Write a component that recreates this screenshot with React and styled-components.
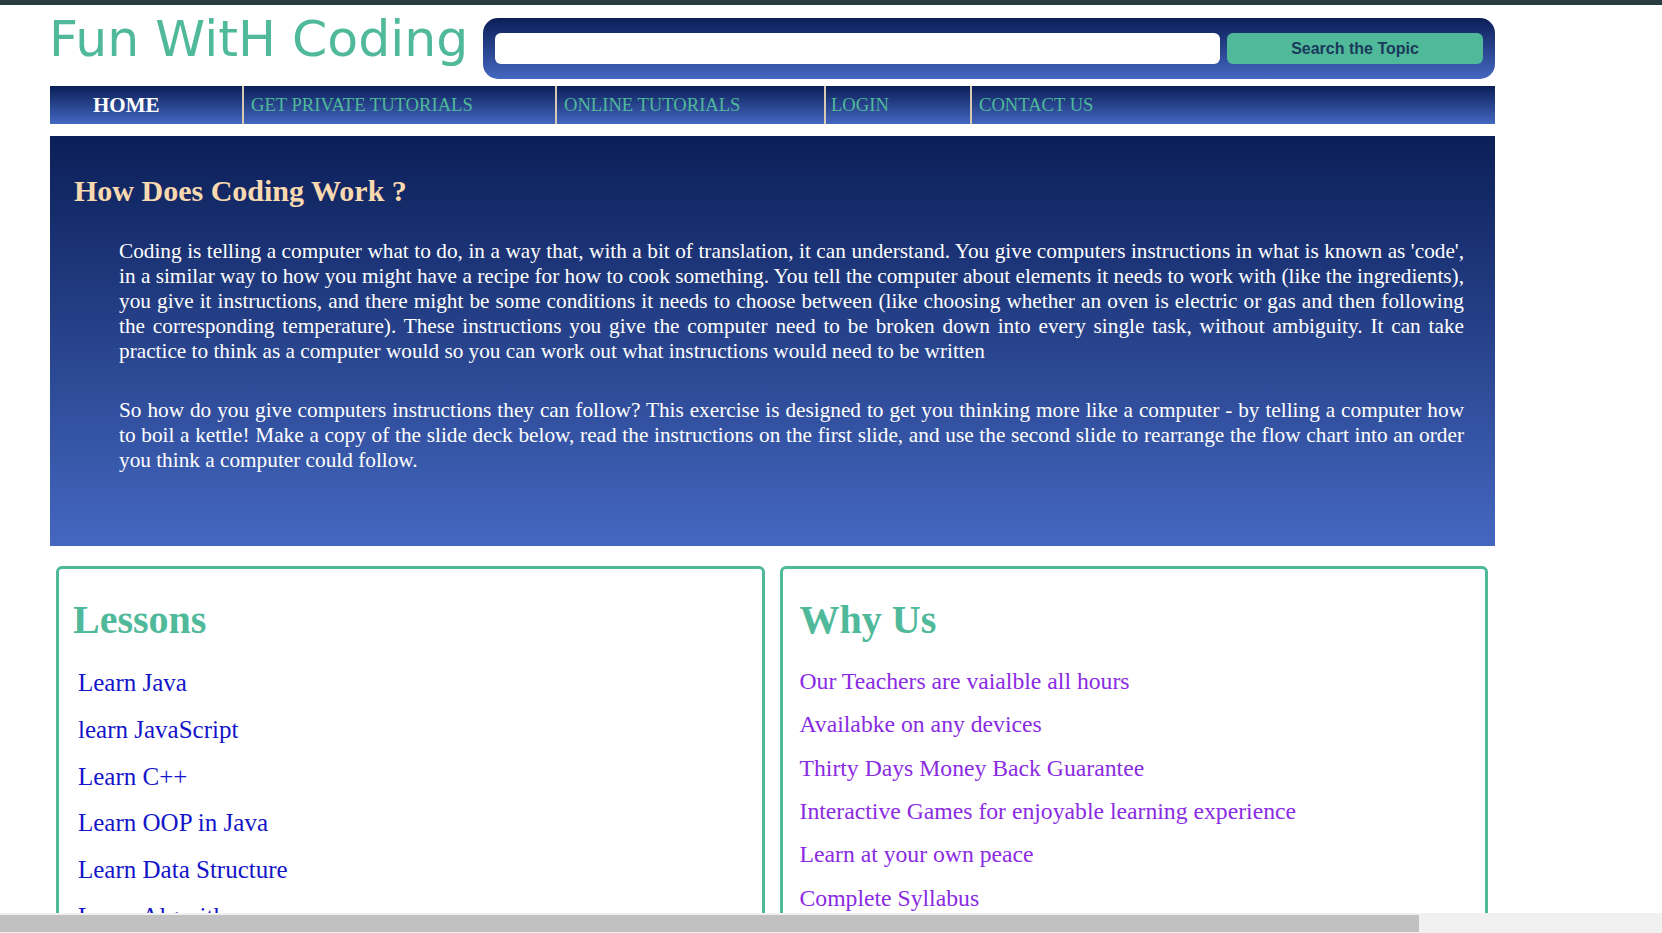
import React from "react";
import styled, { createGlobalStyle } from "styled-components";

const GlobalStyle = createGlobalStyle`
  html, body {
    margin: 0;
    padding: 0;
    overflow: hidden;
    background: #ffffff;
  }
  body {
    font-family: "Liberation Serif", "Times New Roman", serif;
  }
  * { box-sizing: border-box; }
`;

const blueGradient = "linear-gradient(180deg, #0b1f58 0%, #4467c0 100%)";
const teal = "#4fb99a";

const TopBar = styled.div`
  height: 5px;
  background: #283c41;
`;

const Wrapper = styled.div`
  margin-left: 50px;
  width: 1445px;
`;

const Header = styled.header`
  display: flex;
  align-items: flex-start;
`;

const Logo = styled.h1`
  margin: 4.7px 0 0 -1px;
  font-family: "DejaVu Sans", Verdana, sans-serif;
  font-weight: normal;
  font-size: 50.5px;
  line-height: 58px;
  color: ${teal};
  white-space: nowrap;
`;

const SearchBox = styled.form`
  flex: 0 0 1012px;
  margin: 13px 0 0 auto;
  height: 61px;
  padding: 15px 12px;
  display: flex;
  gap: 7px;
  border-radius: 15px;
  background: ${blueGradient};
`;

const SearchInput = styled.input`
  width: 725px;
  height: 31px;
  border: none;
  border-radius: 6px;
  background: #ffffff;
  outline: none;
`;

const SearchButton = styled.button`
  flex: 1;
  height: 31px;
  border: none;
  border-radius: 6px;
  background: ${teal};
  font-family: "Liberation Sans", Arial, sans-serif;
  font-weight: bold;
  font-size: 16px;
  color: #1a3a5a;
  padding: 0;
`;

const Nav = styled.nav`
  margin-top: 7px;
  height: 38px;
  display: flex;
  background: ${blueGradient};
`;

const NavItem = styled.a`
  display: flex;
  align-items: center;
  flex: ${(p) => (p.$w ? `0 0 ${p.$w}px` : "1")};
  padding-left: ${(p) => p.$pl}px;
  border-left: ${(p) => (p.$first ? "none" : "2px solid #d8cab0")};
  font-family: "Liberation Serif", "Times New Roman", serif;
  font-size: ${(p) => (p.$active ? "21px" : "18.6px")};
  font-weight: ${(p) => (p.$active ? "bold" : "normal")};
  color: ${(p) => (p.$active ? "#ffffff" : teal)};
  text-decoration: none;
  white-space: nowrap;
`;

const Main = styled.section`
  margin-top: 12px;
  padding: 37.4px 31px 72.6px 24px;
  background: ${blueGradient};
`;

const MainTitle = styled.h2`
  margin: 0;
  font-size: 30px;
  line-height: 35px;
  font-weight: bold;
  color: #f8d9b0;
`;

const Para = styled.p`
  margin: ${(p) => p.$mt}px 0 0 45px;
  font-size: 21.28px;
  line-height: 25px;
  color: #ffffff;
  text-align: justify;
`;

const Cards = styled.div`
  margin-top: 20px;
  display: grid;
  grid-template-columns: 1fr 1fr;
  gap: 15px;
  padding: 0 7px 0 6px;
`;

const Card = styled.div`
  min-width: 0;
  border: 3px solid ${teal};
  border-radius: 6px;
  padding: 28.5px ${(p) => p.$px}px 40px;
`;

const CardTitle = styled.h2`
  margin: 0;
  font-size: 40px;
  line-height: 46px;
  font-weight: bold;
  color: ${teal};
`;

const List = styled.ul`
  list-style: none;
  margin: 16.7px 0 0 0;
  padding: 0 0 0 ${(p) => p.$indent}px;
`;

const Item = styled.li`
  font-size: ${(p) => p.$fs}px;
  line-height: ${(p) => p.$lh}px;
  color: ${(p) => p.$color};
  white-space: nowrap;
`;

const ScrollTrack = styled.div`
  position: fixed;
  left: 0;
  bottom: 0;
  width: 100%;
  height: 20px;
  background: #f0f0f0;
  padding-top: 2px;
`;

const ScrollThumb = styled.div`
  width: 1419px;
  height: 17px;
  background: #c1c1c1;
`;

const navItems = [
  { label: "HOME", w: 192, pl: 43, first: true, active: true },
  { label: "GET PRIVATE TUTORIALS", w: 313, pl: 7 },
  { label: "ONLINE TUTORIALS", w: 269, pl: 7 },
  { label: "LOGIN", w: 146, pl: 5 },
  { label: "CONTACT US", pl: 7 },
];

const lessons = [
  "Learn Java",
  "learn JavaScript",
  "Learn C++",
  "Learn OOP in Java",
  "Learn Data Structure",
  "Learn Algorithm",
];

const reasons = [
  "Our Teachers are vaialble all hours",
  "Availabke on any devices",
  "Thirty Days Money Back Guarantee",
  "Interactive Games for enjoyable learning experience",
  "Learn at your own peace",
  "Complete Syllabus",
];

export default function App() {
  return (
    <>
      <GlobalStyle />
      <TopBar />
      <Wrapper>
        <Header>
          <Logo>Fun WitH Coding</Logo>
          <SearchBox onSubmit={(e) => e.preventDefault()}>
            <SearchInput type="text" />
            <SearchButton type="submit">Search the Topic</SearchButton>
          </SearchBox>
        </Header>
        <Nav>
          {navItems.map((n) => (
            <NavItem
              key={n.label}
              href="#"
              $w={n.w}
              $pl={n.pl}
              $first={n.first}
              $active={n.active}
            >
              {n.label}
            </NavItem>
          ))}
        </Nav>
        <Main>
          <MainTitle>How Does Coding Work ?</MainTitle>
          <Para $mt={31}>
            Coding is telling a computer what to do, in a way that, with a bit of
            translation, it can understand. You give computers instructions in
            what is known as 'code', in a similar way to how you might have a
            recipe for how to cook something. You tell the computer about elements
            it needs to work with (like the ingredients), you give it
            instructions, and there might be some conditions it needs to choose
            between (like choosing whether an oven is electric or gas and then
            following the corresponding temperature). These instructions you give
            the computer need to be broken down into every single task, without
            ambiguity. It can take practice to think as a computer would so you
            can work out what instructions would need to be written
          </Para>
          <Para $mt={34}>
            So how do you give computers instructions they can follow? This
            exercise is designed to get you thinking more like a computer - by
            telling a computer how to boil a kettle! Make a copy of the slide deck
            below, read the instructions on the first slide, and use the second
            slide to rearrange the flow chart into an order you think a computer
            could follow.
          </Para>
        </Main>
        <Cards>
          <Card $px={14}>
            <CardTitle>Lessons</CardTitle>
            <List $indent={5}>
              {lessons.map((l) => (
                <Item key={l} $fs={25} $lh={46.7} $color="#1414c8">
                  {l}
                </Item>
              ))}
            </List>
          </Card>
          <Card $px={17}>
            <CardTitle>Why Us</CardTitle>
            <List $indent={0}>
              {reasons.map((r) => (
                <Item key={r} $fs={23.7} $lh={43.3} $color="#8a2be2">
                  {r}
                </Item>
              ))}
            </List>
          </Card>
        </Cards>
      </Wrapper>
      <ScrollTrack>
        <ScrollThumb />
      </ScrollTrack>
    </>
  );
}
